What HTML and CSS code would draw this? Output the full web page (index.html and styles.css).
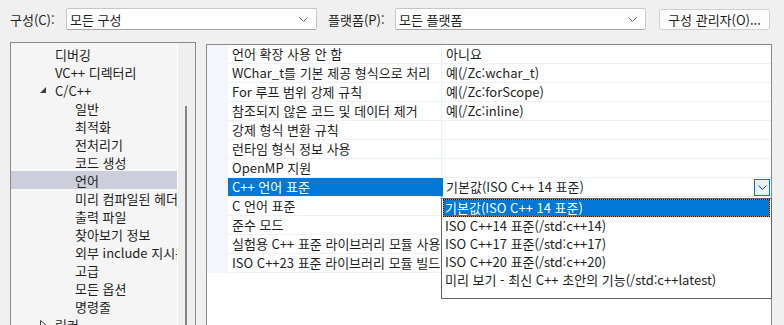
FILE: index.html
```html
<!DOCTYPE html>
<html lang="ko">
<head>
    <meta charset="UTF-8">
    <title>속성 페이지</title>
    <link rel="stylesheet" href="styles.css">
</head>
<body>
    <!-- Top toolbar -->
    <div class="toolbar">
        <span class="tb-label">구성(C):</span>
        <div class="combo">
            <span>모든 구성</span>
            <svg class="chevron" width="9" height="5" viewBox="0 0 9 5"><polyline points="0.5,0.5 4.5,4.5 8.5,0.5" fill="none" stroke="#606060" stroke-width="1"/></svg>
        </div>
        <span class="tb-label platform">플랫폼(P):</span>
        <div class="combo">
            <span>모든 플랫폼</span>
            <svg class="chevron" width="9" height="5" viewBox="0 0 9 5"><polyline points="0.5,0.5 4.5,4.5 8.5,0.5" fill="none" stroke="#606060" stroke-width="1"/></svg>
        </div>
        <button class="tb-button">구성 관리자(O)...</button>
    </div>

    <div class="workspace">
        <!-- Tree -->
        <div class="tree-panel">
            <ul class="tree">
                <li class="lvl1">디버깅</li>
                <li class="lvl1">VC++ 디렉터리</li>
                <li class="lvl1 has-toggle">
                    <svg class="toggle" width="6" height="6" viewBox="0 0 6 6"><polygon points="6,0 6,6 0,6" fill="#3c3c3c"/></svg>
                    C/C++
                </li>
                <li class="lvl2">일반</li>
                <li class="lvl2">최적화</li>
                <li class="lvl2">전처리기</li>
                <li class="lvl2">코드 생성</li>
                <li class="lvl2 selected">언어</li>
                <li class="lvl2">미리 컴파일된 헤더</li>
                <li class="lvl2">출력 파일</li>
                <li class="lvl2">찾아보기 정보</li>
                <li class="lvl2">외부 include 지시문</li>
                <li class="lvl2">고급</li>
                <li class="lvl2">모든 옵션</li>
                <li class="lvl2">명령줄</li>
                <li class="lvl1 has-toggle">
                    <svg class="toggle" width="6" height="9" viewBox="0 0 6 9"><polygon points="0.5,0.5 5.5,4.5 0.5,8.5" fill="none" stroke="#3c3c3c" stroke-width="1"/></svg>
                    링커
                </li>
            </ul>
            <div class="tree-scroll"><div class="thumb"></div></div>
        </div>

        <!-- Property grid -->
        <div class="grid-panel">
            <div class="row"><div class="gutter"></div><div class="name">언어 확장 사용 안 함</div><div class="value">아니요</div></div>
            <div class="row"><div class="gutter"></div><div class="name">WChar_t를 기본 제공 형식으로 처리</div><div class="value">예(/Zc:wchar_t)</div></div>
            <div class="row"><div class="gutter"></div><div class="name">For 루프 범위 강제 규칙</div><div class="value">예(/Zc:forScope)</div></div>
            <div class="row"><div class="gutter"></div><div class="name">참조되지 않은 코드 및 데이터 제거</div><div class="value">예(/Zc:inline)</div></div>
            <div class="row"><div class="gutter"></div><div class="name">강제 형식 변환 규칙</div><div class="value"></div></div>
            <div class="row"><div class="gutter"></div><div class="name">런타임 형식 정보 사용</div><div class="value"></div></div>
            <div class="row"><div class="gutter"></div><div class="name">OpenMP 지원</div><div class="value"></div></div>
            <div class="row active">
                <div class="gutter"></div>
                <div class="name">C++ 언어 표준</div>
                <div class="value">
                    <span>기본값(ISO C++ 14 표준)</span>
                    <div class="drop-btn">
                        <svg width="9" height="5" viewBox="0 0 9 5"><polyline points="0.5,0.5 4.5,4.5 8.5,0.5" fill="none" stroke="#404040" stroke-width="1"/></svg>
                    </div>
                </div>
            </div>
            <div class="row"><div class="gutter"></div><div class="name">C 언어 표준</div><div class="value"></div></div>
            <div class="row"><div class="gutter"></div><div class="name">준수 모드</div><div class="value"></div></div>
            <div class="row"><div class="gutter"></div><div class="name">실험용 C++ 표준 라이브러리 모듈 사용</div><div class="value"></div></div>
            <div class="row"><div class="gutter"></div><div class="name">ISO C++23 표준 라이브러리 모듈 빌드</div><div class="value"></div></div>

            <!-- Open dropdown -->
            <ul class="dropdown-list">
                <li class="current">기본값(ISO C++ 14 표준)</li>
                <li>ISO C++14 표준(/std:c++14)</li>
                <li>ISO C++17 표준(/std:c++17)</li>
                <li>ISO C++20 표준(/std:c++20)</li>
                <li>미리 보기 - 최신 C++ 초안의 기능(/std:c++latest)</li>
            </ul>
        </div>
    </div>
</body>
</html>
```

FILE: styles.css
```css
/* Reset */
* {
    margin: 0;
    padding: 0;
    box-sizing: border-box;
}

body {
    font-family: "Noto Sans CJK KR", "Noto Sans", sans-serif;
    font-size: 13px;
    color: #1e1e1e;
    background-color: #f0f0f0;
    width: 784px;
    height: 325px;
    overflow: hidden;
}

/* Toolbar */
.toolbar {
    display: flex;
    align-items: center;
    height: 42px;
    padding: 0 10px 4px;
}

.tb-label {
    width: 56px;
}

    .tb-label.platform {
        width: 67px;
        margin-left: 11px;
    }

.combo {
    width: 251px;
    height: 22px;
    background-color: #fff;
    border: 1px solid #c8c8c8;
    border-bottom-color: #a8a8a8;
    border-radius: 2px;
    display: flex;
    align-items: center;
    justify-content: space-between;
    padding: 0 8px 0 3px;
}

.tb-button {
    width: 111px;
    height: 21px;
    margin-left: 13px;
    font-family: inherit;
    font-size: 13px;
    color: #1e1e1e;
    background-color: #fdfdfd;
    border: 1px solid #d0d0d0;
    border-radius: 3px;
}

/* Workspace */
.workspace {
    display: flex;
    padding-left: 10px;
}

/* Tree */
.tree-panel {
    width: 186px;
    height: 300px;
    display: flex;
    background-color: #f5f5f5;
    border: 1px solid #8a8a8a;
    border-bottom: none;
    overflow: hidden;
}

.tree {
    list-style: none;
    width: 166px;
    margin-top: 2px;
    white-space: nowrap;
    overflow: hidden;
}

    .tree li {
        height: 18px;
        display: flex;
        align-items: center;
    }

    .tree .lvl1 {
        padding-left: 44px;
    }

        .tree .lvl1.has-toggle {
            padding-left: 29px;
        }

    .tree .toggle {
        margin-right: 9px;
    }

    .tree .lvl2 {
        padding-left: 64px;
    }

    .tree .selected {
        background-color: #cccedb;
    }

.tree-scroll {
    width: 18px;
    border-left: 1px solid #fff;
    background-color: #efefef;
    padding: 63px 0 0 7px;
}

    .tree-scroll .thumb {
        width: 2px;
        height: 300px;
        background-color: #858585;
    }

/* Property grid */
.grid-panel {
    position: relative;
    width: 566px;
    height: 300px;
    margin-top: 2px;
    margin-left: 10px;
    background-color: #fff;
    border: 1px solid #8a8a8a;
    border-bottom: none;
}

.row {
    display: flex;
    height: 19px;
}

    .row .gutter {
        width: 21px;
        background-color: #f4f6fc;
    }

    .row .name {
        width: 213px;
        padding-left: 4px;
        line-height: 18px;
        border-bottom: 1px solid #eef1f7;
        white-space: nowrap;
        overflow: hidden;
    }

    .row .value {
        flex: 1;
        display: flex;
        align-items: center;
        justify-content: space-between;
        padding-left: 4px;
        line-height: 18px;
        border-left: 1px solid #eef1f7;
        border-bottom: 1px solid #eef1f7;
    }

    .row.active .name {
        background-color: #0078d7;
        color: #fff;
    }

    .row.active .value {
        border-left: 2px solid #0078d7;
        padding-left: 3px;
    }

.drop-btn {
    width: 16px;
    height: 17px;
    margin-right: 1px;
    border: 1px solid #0078d7;
    background-color: #e5f1fb;
    display: flex;
    align-items: center;
    justify-content: center;
}

/* Dropdown list */
.dropdown-list {
    position: absolute;
    left: 234px;
    top: 153px;
    width: 331px;
    height: 101px;
    list-style: none;
    background-color: #fff;
    border: 1px solid #646464;
}

    .dropdown-list li {
        height: 18px;
        line-height: 18px;
        padding-left: 3px;
        white-space: nowrap;
    }

        .dropdown-list li.current {
            margin: 0 1px;
            padding-left: 2px;
            background-color: #0078d7;
            color: #fff;
            box-shadow: inset 0 0 0 1px #d9832c;
            outline: 1px dotted #111;
            outline-offset: -1px;
        }
```
